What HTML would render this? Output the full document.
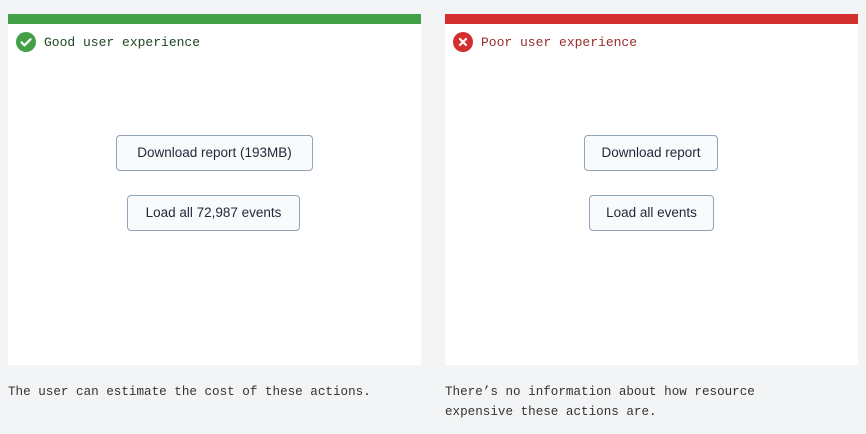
<!DOCTYPE html>
<html><head><style>
body{margin:0;width:866px;height:434px;background:#f3f4f6;position:relative;font-family:"Liberation Sans",sans-serif;}
.panel{position:absolute;top:14px;width:413px;height:351px;background:#fff;}
.bar{height:10px;}
.hd{position:absolute;left:36px;top:20px;font-family:"Liberation Mono",monospace;font-size:13px;line-height:18px;}
.ic{position:absolute;left:8px;top:18px;width:20px;height:20px;}
.btn{position:absolute;height:34px;border:1px solid #94a3b8;border-radius:4px;background:#f8fafc;color:#1f2937;font-size:13.5px;line-height:34px;text-align:center;box-sizing:content-box;}
.cap{position:absolute;top:382px;font-family:"Liberation Mono",monospace;font-size:12.6px;line-height:20px;color:#333;}
</style></head><body>
<div class="panel" style="left:8px">
 <div class="bar" style="background:#43a047"></div>
 <svg class="ic" viewBox="0 0 20 20"><circle cx="10" cy="10" r="10" fill="#43a047"/><path d="M5.5 10.3l3 3 6-6" stroke="#fff" stroke-width="2.2" fill="none" stroke-linecap="round" stroke-linejoin="round"/></svg>
 <div class="hd" style="color:#1e4620">Good user experience</div>
 <div class="btn" style="left:108px;top:121px;width:195px">Download report (193MB)</div>
 <div class="btn" style="left:119px;top:181px;width:171px">Load all 72,987 events</div>
</div>
<div class="panel" style="left:445px">
 <div class="bar" style="background:#d32f2f"></div>
 <svg class="ic" viewBox="0 0 20 20"><circle cx="10" cy="10" r="10" fill="#d32f2f"/><path d="M7 7l6 6M13 7l-6 6" stroke="#fff" stroke-width="2.2" stroke-linecap="round"/></svg>
 <div class="hd" style="color:#9b2c2c">Poor user experience</div>
 <div class="btn" style="left:139px;top:121px;width:132px">Download report</div>
 <div class="btn" style="left:144px;top:181px;width:123px">Load all events</div>
</div>
<div class="cap" style="left:8px">The user can estimate the cost of these actions.</div>
<div class="cap" style="left:445px;width:340px">There’s no information about how resource<br>expensive these actions are.</div>
</body></html>
